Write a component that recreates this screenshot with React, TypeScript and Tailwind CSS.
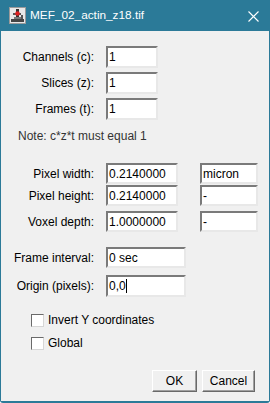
import React from "react";

const F = { fontFamily: '"Liberation Sans", Arial, sans-serif' };

function Field({ value, w, caret }: { value: string; w: string; caret?: boolean }) {
  return (
    <div
      className={`${w} h-[21px] bg-white border-2 border-t-[#7a7a7a] border-l-[#7a7a7a] border-r-[#e8e8e8] border-b-[#e8e8e8] flex items-center pl-[1px] text-[12px] text-black leading-none`}
    >
      <span>{value}</span>
      {caret && <span className="inline-block w-[1px] h-[14px] bg-black" />}
    </div>
  );
}

function Label({ text }: { text: string }) {
  return <div className="w-[93px] text-right text-[12px] text-black leading-none">{text}</div>;
}

function Check({ label }: { label: string }) {
  return (
    <div className="flex items-center h-[16px] pl-[30px] gap-[4px]">
      <div className="w-[13px] h-[13px] bg-white border border-t-[#6a6a6a] border-l-[#6a6a6a] border-r-[#d6d6d6] border-b-[#d6d6d6]" />
      <span className="text-[12px] text-black leading-none">{label}</span>
    </div>
  );
}

function Btn({ label, w }: { label: string; w: string }) {
  return (
    <div
      className={`${w} h-[22px] bg-[#f0f0f0] border border-t-white border-l-white border-r-[#696969] border-b-[#696969] shadow-[inset_-1px_-1px_0_#a0a0a0] flex items-center justify-center text-[12px] text-black leading-none`}
    >
      {label}
    </div>
  );
}

export default function App() {
  return (
    <div className="w-[270px] h-[403px] bg-[#2b7a98] flex flex-col rounded-bl-[3px] rounded-br-[3px] overflow-hidden" style={F}>
      <div className="h-[31px] flex items-center shrink-0 relative">
        <svg className="absolute left-[9px] top-[7px]" width="17" height="17" viewBox="0 0 17 17">
          <rect x="0.5" y="0.5" width="16" height="16" fill="#e8e8e8" stroke="#9a9a9a" />
          <rect x="2" y="12" width="13" height="3" fill="#444" />
          <rect x="5" y="10" width="7" height="2" fill="#777" />
          <rect x="7" y="2" width="3" height="8" fill="#333" />
          <rect x="4" y="6" width="8" height="2" fill="#555" />
          <circle cx="8.5" cy="6.5" r="2.3" fill="#e02020" />
          <rect x="12" y="8" width="2" height="4" fill="#555" />
        </svg>
        <span className="absolute left-[30px] top-[8px] text-white text-[11.8px] leading-[14px]">MEF_02_actin_z18.tif</span>
        <svg className="absolute left-[248px] top-[11px]" width="11" height="11" viewBox="0 0 11 11">
          <path d="M0.5 0.5 L10.5 10.5 M10.5 0.5 L0.5 10.5" stroke="white" strokeWidth="1.1" />
        </svg>
      </div>
      <div className="flex-1 mx-[1px] mb-[2px] bg-[#f0f0f0] flex flex-col pt-[15px]">
        <div className="flex flex-col gap-[4px]">
          {[
            ["Channels (c):", "1"],
            ["Slices (z):", "1"],
            ["Frames (t):", "1"],
          ].map(([l, v]) => (
            <div key={l} className="flex items-center gap-[12px] h-[22px]">
              <Label text={l} />
              <Field value={v} w="w-[52px] h-[22px]" />
            </div>
          ))}
        </div>
        <div className="mt-[9px] h-[14px] pl-[17px] text-[12px] leading-[14px] text-[#333]">Note: c*z*t must equal 1</div>
        <div className="mt-[20px] flex flex-col">
          {[
            ["Pixel width:", "0.2140000", "micron", "mt-[0px]"],
            ["Pixel height:", "0.2140000", "-", "mt-[1px]"],
            ["Voxel depth:", "1.0000000", "-", "mt-[5px]"],
          ].map(([l, v, u, m]) => (
            <div key={l} className={`flex items-center h-[21px] ${m}`}>
              <Label text={l} />
              <div className="ml-[12px]">
                <Field value={v} w="w-[72px]" />
              </div>
              <div className="ml-[22px]">
                <Field value={u} w="w-[58px]" />
              </div>
            </div>
          ))}
        </div>
        <div className="mt-[15px] flex flex-col gap-[7px]">
          <div className="flex items-center h-[21px] gap-[12px]">
            <Label text="Frame interval:" />
            <Field value="0 sec" w="w-[80px]" />
          </div>
          <div className="flex items-center h-[22px] gap-[12px]">
            <Label text="Origin (pixels):" />
            <Field value="0,0" w="w-[80px] h-[22px]" caret />
          </div>
        </div>
        <div className="mt-[15px] flex flex-col gap-[7px]">
          <Check label="Invert Y coordinates" />
          <Check label="Global" />
        </div>
        <div className="mt-[19px] flex gap-[5px] pl-[151px]">
          <Btn label="OK" w="w-[45px]" />
          <Btn label="Cancel" w="w-[53px]" />
        </div>
      </div>
    </div>
  );
}
